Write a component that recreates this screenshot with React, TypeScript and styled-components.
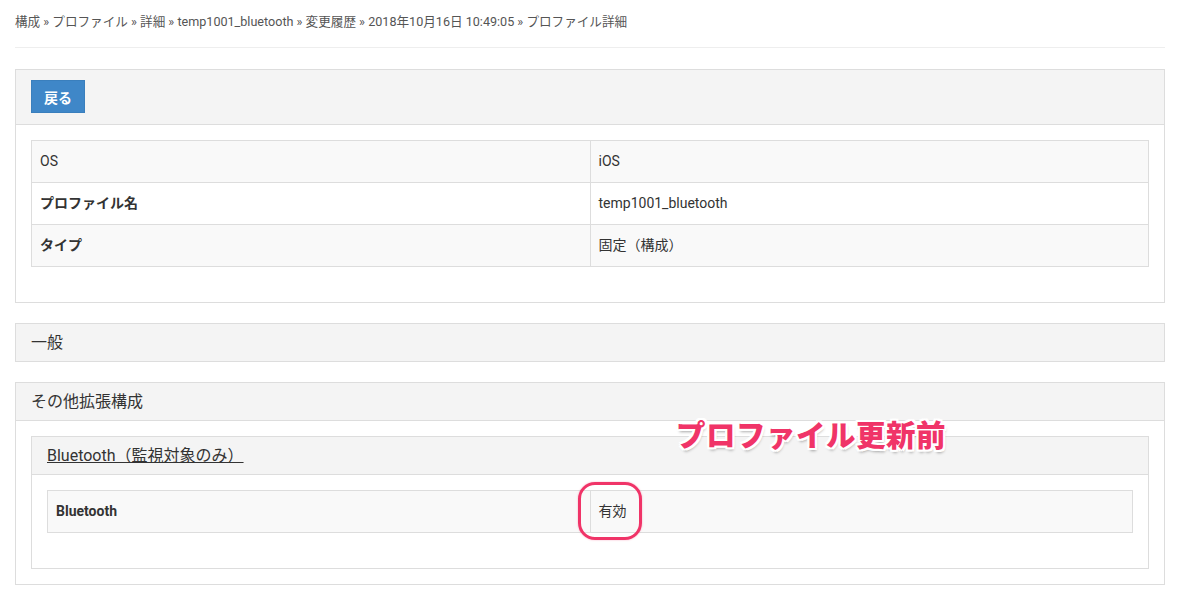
import React from "react";
import styled, { createGlobalStyle } from "styled-components";

// global styles

const GlobalStyle = createGlobalStyle`
  body {
    margin: 0;
    background: #fff;
    color: #333;
    font-family: Roboto, "Noto Sans CJK JP", sans-serif;
    font-size: 14px;
  }
`;

const Page = styled.div`
  position: relative;
  padding: 0 16px 15px 15px;
`;

const Breadcrumb = styled.div`
  padding: 13px 0 16px;
  font-size: 12.6px;
  line-height: 18px;
  color: #555;
  border-bottom: 1px solid #eee;
  margin-bottom: 21px;
`;

const Panel = styled.section`
  border: 1px solid #ddd;
  margin-bottom: 20px;
`;

const PanelHeading = styled.div<{ $tall?: boolean }>`
  background: #f4f4f4;
  padding: ${(p) => (p.$tall ? "10px 15px 11px" : "9px 15px 8px")};
  font-size: 16px;
  line-height: 20px;
  color: #333;

  & + div {
    border-top: 1px solid #ddd;
  }
`;

const PanelBody = styled.div`
  padding: 15px 15px 15px;
`;

const BackButton = styled.button`
  display: block;
  width: 54px;
  height: 33px;
  background: #3f87c8;
  border: 1px solid #3a7fbd;
  color: #fff;
  font-family: inherit;
  font-size: 14px;
  font-weight: 700;
  padding: 0;
  cursor: pointer;
`;

const Table = styled.table`
  width: 100%;
  border-collapse: collapse;
  margin-bottom: 20px;
`;

const Row = styled.tr<{ $striped?: boolean }>`
  background: ${(p) => (p.$striped ? "#f9f9f9" : "#fff")};
`;

const Cell = styled.td<{ $bold?: boolean }>`
  width: 50%;
  border: 1px solid #ddd;
  padding: 12px 8px;
  height: 17px;
  line-height: 17px;
  font-size: 14px;
  font-weight: ${(p) => (p.$bold ? 700 : 400)};
  color: #333;
`;

const SubTitle = styled.a`
  color: #333;
  text-decoration: underline;
  font-size: 16px;
`;

// red annotation layered on top of the page

const Note = styled.div`
  position: absolute;
  left: 676px;
  top: 414px;
  font-family: "Noto Sans CJK JP", sans-serif;
  font-weight: 900;
  font-size: 29.5px;
  line-height: 38px;
  letter-spacing: 0.5px;
  color: #f03468;
  text-shadow: 2px 0 0 #fff, -2px 0 0 #fff, 0 2px 0 #fff, 0 -2px 0 #fff,
    2px 2px 0 #fff, -2px -2px 0 #fff, 2px -2px 0 #fff, -2px 2px 0 #fff,
    1px 3px 3px rgba(0, 0, 0, 0.35);
`;

const Ring = styled.div`
  position: absolute;
  left: 578px;
  top: 482px;
  width: 58px;
  height: 52px;
  border: 3px solid #f03468;
  border-radius: 17px;
  box-shadow: 0 0 2px rgba(240, 52, 104, 0.4);
`;

type Item = { label: string; value: string; bold?: boolean };

const profile: Item[] = [
  { label: "OS", value: "iOS" },
  { label: "プロファイル名", value: "temp1001_bluetooth", bold: true },
  { label: "タイプ", value: "固定（構成）", bold: true },
];

function InfoTable({ items }: { items: Item[] }) {
  return (
    <Table>
      <tbody>
        {items.map((item, i) => (
          <Row key={item.label} $striped={i % 2 === 0}>
            <Cell $bold={item.bold}>{item.label}</Cell>
            <Cell>{item.value}</Cell>
          </Row>
        ))}
      </tbody>
    </Table>
  );
}

export default function App() {
  return (
    <>
      <GlobalStyle />
      <Page>
        <Breadcrumb>
          構成 » プロファイル » 詳細 » temp1001_bluetooth » 変更履歴 » 2018年10月16日 10:49:05 » プロファイル詳細
        </Breadcrumb>

        <Panel>
          <PanelHeading $tall>
            <BackButton>戻る</BackButton>
          </PanelHeading>
          <PanelBody>
            <InfoTable items={profile} />
          </PanelBody>
        </Panel>

        <Panel>
          <PanelHeading>一般</PanelHeading>
        </Panel>

        <Panel>
          <PanelHeading>その他拡張構成</PanelHeading>
          <PanelBody>
            <Panel style={{ marginBottom: 0 }}>
              <PanelHeading>
                <SubTitle>Bluetooth（監視対象のみ）</SubTitle>
              </PanelHeading>
              <PanelBody>
                <InfoTable items={[{ label: "Bluetooth", value: "有効", bold: true }]} />
              </PanelBody>
            </Panel>
          </PanelBody>
        </Panel>

        <Note>プロファイル更新前</Note>
        <Ring />
      </Page>
    </>
  );
}
